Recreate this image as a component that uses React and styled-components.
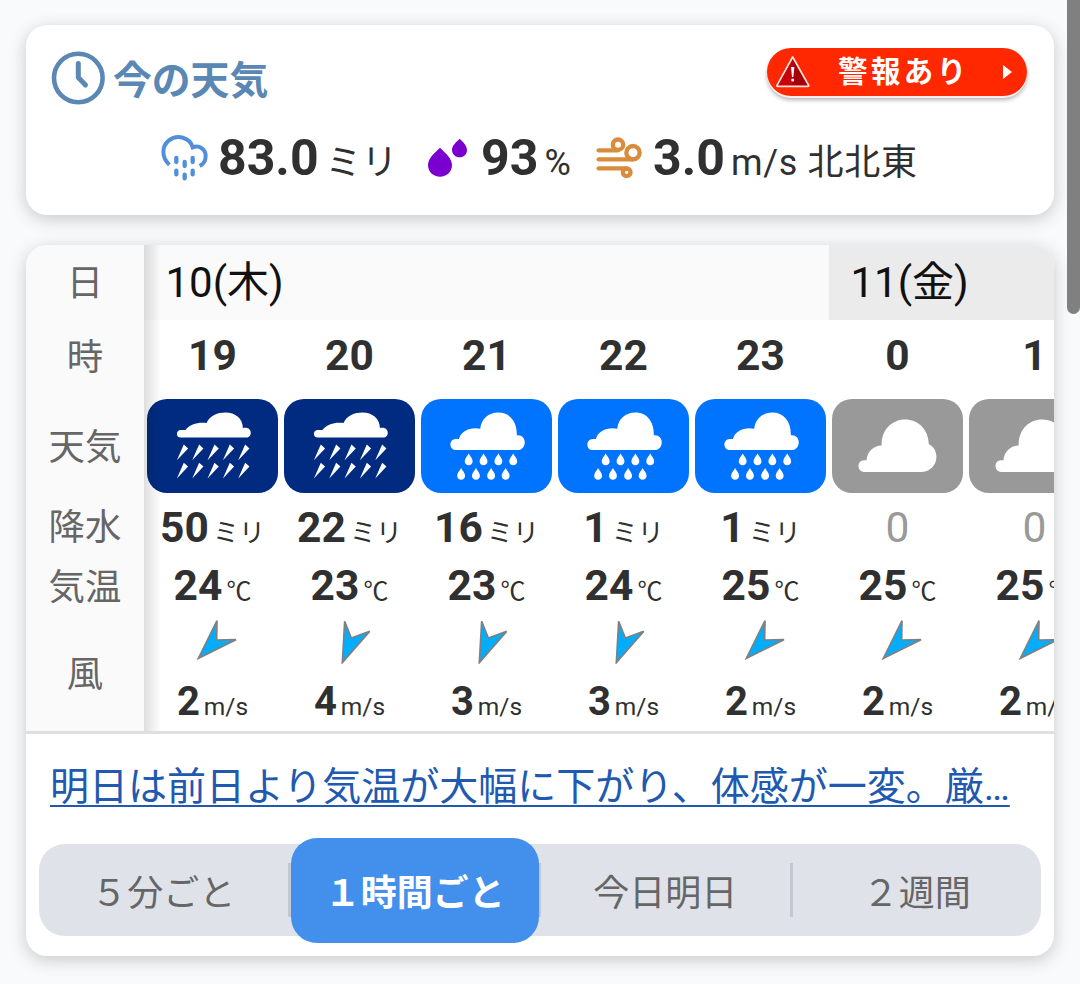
import React from "react";
import styled, { createGlobalStyle } from "styled-components";

const GlobalStyle = createGlobalStyle`
    * {
        box-sizing: border-box;
    }
    body {
        margin: 0;
        height: 984px;
        overflow: hidden;
        background: #f9fafc;
        font-family: Roboto, "Noto Sans CJK JP", sans-serif;
        color: #303030;
    }
`;

const Page = styled.main`
    display: flex;
    flex-direction: column;
    gap: 30px;
    width: 1080px;
    padding: 25px 26px 28px;
`;

const Scrollbar = styled.div`
    position: fixed;
    top: -10px;
    right: 0;
    width: 13px;
    height: 324px;
    border-radius: 7px;
    background: #808080;
`;

const Card = styled.section`
    overflow: hidden;
    border-radius: 21px;
    background: #fff;
    box-shadow: 0 4px 18px rgba(0, 0, 0, 0.2);
`;

const NowCard = styled(Card)`
    height: 190px;
`;

const NowHeader = styled.header`
    display: flex;
    justify-content: space-between;
    height: 105px;
    padding: 22px 27px 0 25px;
`;

const Title = styled.h1`
    display: flex;
    align-items: center;
    gap: 8px;
    height: 62px;
    margin: 0;
    font-size: 38.8px;
    font-weight: 700;
    line-height: 62px;
    color: #5a87b3;

    span {
        padding-top: 5px;
    }
`;

const WarningButton = styled.a`
    display: flex;
    align-items: center;
    width: 260px;
    height: 48px;
    margin-top: 1px;
    padding: 0 15px 0 8px;
    border-radius: 24px;
    background: #ff2800;
    box-shadow: 0 2px 0 #fdf1ee, 0 4px 4px rgba(0, 0, 0, 0.3);
    color: #fff;
`;

const WarningText = styled.span`
    flex: 1;
    padding-left: 27px;
    font-size: 29.5px;
    font-weight: 700;
    line-height: 48px;
    letter-spacing: 3.4px;
    white-space: nowrap;
`;

const NowValues = styled.div`
    display: flex;
    padding-left: 134px;
    height: 56px;
`;

const NowItem = styled.div`
    display: flex;
    align-items: baseline;
    width: ${(p) => p.$width}px;
    font-size: 50px;
    font-weight: 700;
    line-height: 56px;
    white-space: nowrap;

    svg {
        flex: none;
        align-self: flex-start;
        margin-top: ${(p) => p.$top}px;
        margin-right: ${(p) => p.$gap}px;
    }
`;

const NowUnit = styled.span`
    margin-left: ${(p) => p.$gap}px;
    font-size: 36px;
    font-weight: 400;
    line-height: 1;
    letter-spacing: ${(p) => p.$spacing || 0}px;
`;

const ForecastCard = styled(Card)`
    height: 711px;
`;

const Table = styled.div`
    display: flex;
    height: 489px;
    border-bottom: 3px solid #dfdfdf;
`;

const Labels = styled.div`
    flex: none;
    width: 118px;
    background: #fafafa;
`;

const Label = styled.div`
    height: ${(p) => p.$height}px;
    font-size: 36.4px;
    line-height: ${(p) => p.$line}px;
    text-align: center;
    color: #666;
`;

const Scroller = styled.div`
    position: relative;
    flex: 1;
    overflow: hidden;

    &::before {
        content: "";
        position: absolute;
        z-index: 1;
        inset: 0 auto 0 0;
        width: 17px;
        background: linear-gradient(to right, rgba(0, 0, 0, 0.13), rgba(0, 0, 0, 0));
    }
`;

const Dates = styled.div`
    display: flex;
    height: 75px;
`;

const DateCell = styled.div`
    flex: none;
    width: ${(p) => p.$hours * 137}px;
    padding-left: 21.5px;
    background: ${(p) => (p.$shaded ? "#ebebeb" : "#fafafa")};
    font-size: 42px;
    line-height: 75px;
    color: #111;
`;

const Hours = styled.div`
    display: flex;
`;

const Hour = styled.div`
    flex: none;
    width: 137px;
    text-align: center;
`;

const Time = styled.div`
    height: 79px;
    font-size: 42.5px;
    font-weight: 700;
    line-height: 72px;
`;

const Tile = styled.div`
    width: 131px;
    height: 94px;
    margin-left: 3px;
    overflow: hidden;
    border-radius: 20px;
    background: ${(p) => p.$color};

    svg {
        display: block;
        width: 131px;
        height: 94px;
    }
`;

const Reading = styled.div`
    display: flex;
    justify-content: center;
    align-items: baseline;
    gap: ${(p) => p.$gap || 4}px;
    height: ${(p) => p.$height || 58}px;
    font-size: ${(p) => p.$size || 42.5}px;
    font-weight: ${(p) => (p.$empty ? 400 : 700)};
    line-height: ${(p) => p.$height || 58}px;
    color: ${(p) => (p.$empty ? "#999" : "#303030")};
    white-space: nowrap;

    small {
        font-size: ${(p) => p.$unit || 26}px;
        font-weight: 400;
        line-height: 1;
    }
`;

const Arrow = styled.svg`
    display: block;
    width: 50px;
    height: 50px;
    margin: 4px auto -2px;
`;

const NewsLink = styled.a`
    display: block;
    width: 1000px;
    height: 110px;
    padding-left: 24px;
    font-size: 39px;
    line-height: 107px;
    color: #2158b0;
    text-decoration: underline;
    text-decoration-thickness: 2px;
    text-underline-offset: 5px;
    white-space: nowrap;
`;

const Tabs = styled.nav`
    display: flex;
    align-items: center;
    height: 92px;
    margin: 0 13px;
    border-radius: 26px;
    background: #e0e2ea;
`;

const Tab = styled.button`
    position: relative;
    flex: 1;
    height: ${(p) => (p.$active ? 105 : 92)}px;
    margin: 0 ${(p) => (p.$active ? -1 : 0)}px 0 0;
    padding: 0;
    border: 0;
    border-radius: 26px;
    background: ${(p) => (p.$active ? "#438fec" : "transparent")};
    color: ${(p) => (p.$active ? "#fff" : "#666")};
    font-family: inherit;
    font-size: 36px;
    font-weight: ${(p) => (p.$active ? 700 : 400)};
`;

const Divider = styled.i`
    width: 3px;
    height: 54px;
    background: #c4c7d0;
`;

const ClockIcon = () => (
    <svg width="54" height="54" viewBox="0 0 54 54" fill="none" stroke="#5a87b3">
        <circle cx="27.3" cy="27" r="24.3" strokeWidth="4.6" />
        <path d="M27.300 12.500V26.500L34.500 34" strokeWidth="5" strokeLinecap="round" strokeLinejoin="round" />
    </svg>
);

const AlertIcon = () => (
    <svg width="36" height="34" viewBox="104 102 108 102">
        <defs>
            <linearGradient id="alert" x1="0" x2="1">
                <stop offset="0.45" stopColor="#c8000c" />
                <stop offset="0.55" stopColor="#a50008" />
            </linearGradient>
        </defs>
        <path
            d="M157 108L205 193Q206 196 202 196H112Q108 196 110 193Z"
            fill="url(#alert)"
            stroke="#ffe4de"
            strokeWidth="5"
            strokeLinejoin="round"
        />
        <path d="M152 138H162L159 168H155Z" fill="#fff" />
        <circle cx="157" cy="177" r="4.5" fill="#fff" />
    </svg>
);

const RainIcon = () => (
    <svg width="50" height="50" viewBox="420 336 150 150" fill="none" stroke="#528fdb" strokeLinecap="round">
        <path
            d="M448 434C424 412 425 379 446 362C472 341 510 353 518 382C540 374 557 389 557 408C557 423 549 433 539 438"
            strokeWidth="12"
            strokeLinecap="butt"
        />
        <path d="M469 414V426M518 414V426M494 426V438M469 452V463M518 452V463M494 464V475" strokeWidth="13" />
    </svg>
);

const DropsIcon = () => (
    <svg width="42" height="42" viewBox="138 47 126 126" fill="#7b00d0">
        <path d="M180 82C196 97 216 114 216 134C216 155 200 169 180 169C160 169 144 155 144 134C144 114 164 97 180 82Z" />
        <path d="M239 55C249 65 261 75 261 89C261 102 251 111 239 111C227 111 216 102 216 89C216 75 229 65 239 55Z" />
    </svg>
);

const WindIcon = () => (
    <svg
        width="48"
        height="48"
        viewBox="646 41 144 144"
        fill="none"
        stroke="#d98c3c"
        strokeWidth="13"
        strokeLinecap="round"
    >
        <path d="M657 90H714" />
        <circle cx="715" cy="73" r="15.5" />
        <path d="M657 117H760" />
        <circle cx="760" cy="97" r="20" />
        <path d="M657 144H741" />
        <circle cx="741" cy="156" r="11.5" />
    </svg>
);

const streakXs = [0, 46.5, 93, 139.5, 186];

const HeavyRain = () => (
    <svg viewBox="10 26 396 285" fill="#fff">
        <path d="M112 143C96 143 96 120 112 120H126C140 101 168 95 190 99C199 76 224 67 247 67C277 67 301 86 300 114C315 110 324 118 324 128C324 138 317 143 308 143Z" />
        {[0, 55].map((y) =>
            streakXs.map((x) => (
                <path key={`${x}-${y}`} d="M100 212L121 164L134 176Z" transform={`translate(${x} ${y})`} />
            ))
        )}
    </svg>
);

const dropSpots = [
    [565, 191],
    [610, 191],
    [655, 191],
    [700, 191],
    [542, 235],
    [587, 235],
    [633, 235],
    [677, 235],
];

const Rain = () => (
    <svg viewBox="421 26 396 285" fill="#fff">
        <path d="M526 181C504 181 504 147 526 147H535C543 121 572 110 600 116C603 87 625 67 655 67C688 67 712 92 711 136C725 134 735 144 735 157C735 172 725 181 712 181Z" />
        {dropSpots.map(([x, y]) => (
            <path
                key={`${x}-${y}`}
                d="M0 0C4 8 12 15 12 24C12 32 6 36 0 36C-6 36-12 32-12 24C-12 15-4 8 0 0Z"
                transform={`translate(${x} ${y})`}
            />
        ))}
    </svg>
);

const Cloudy = () => (
    <svg viewBox="34 491 396 285" fill="#fff">
        <path d="M131 712C108 712 108 677 131 677H138C140 650 159 633 184 632C182 585 215 553 255 553C295 553 326 583 327 628C343 636 350 650 350 667C350 692 330 712 306 712Z" />
    </svg>
);

const weathers = {
    heavy: { color: "#002b80", Icon: HeavyRain },
    rain: { color: "#0073ff", Icon: Rain },
    cloudy: { color: "#999", Icon: Cloudy },
};

const arrows = {
    sw: "174,476 230,363 229,421 287,420",
    ssw: "195,489 202,365 222,415 277,395",
};

const hours = [
    { time: 19, weather: "heavy", rain: 50, temp: 24, dir: "sw", wind: 2 },
    { time: 20, weather: "heavy", rain: 22, temp: 23, dir: "ssw", wind: 4 },
    { time: 21, weather: "rain", rain: 16, temp: 23, dir: "ssw", wind: 3 },
    { time: 22, weather: "rain", rain: 1, temp: 24, dir: "ssw", wind: 3 },
    { time: 23, weather: "rain", rain: 1, temp: 25, dir: "sw", wind: 2 },
    { time: 0, weather: "cloudy", rain: 0, temp: 25, dir: "sw", wind: 2 },
    { time: 1, weather: "cloudy", rain: 0, temp: 25, dir: "sw", wind: 2 },
];

const HourColumn = ({ time, weather, rain, temp, dir, wind }) => {
    const { color, Icon } = weathers[weather];
    return (
        <Hour>
            <Time>{time}</Time>
            <Tile $color={color}>
                <Icon />
            </Tile>
            <Reading $height={69} $empty={rain === 0}>
                {rain}
                {rain > 0 && <small>ミリ</small>}
            </Reading>
            <Reading $height={48} $unit={25}>
                {temp}
                <small>℃</small>
            </Reading>
            <Arrow viewBox="143 343 150 150">
                <polygon points={arrows[dir]} fill="#00adff" stroke="#808080" strokeWidth="5" />
            </Arrow>
            <Reading $size={40} $gap={4} $height={80} $unit={24.5}>
                {wind}
                <small>m/s</small>
            </Reading>
        </Hour>
    );
};

const App = () => {
    return (
        <>
            <GlobalStyle />
            <Page>
                <NowCard>
                    <NowHeader>
                        <Title>
                            <ClockIcon />
                            <span>今の天気</span>
                        </Title>
                        <WarningButton>
                            <AlertIcon />
                            <WarningText>警報あり</WarningText>
                            <svg width="9" height="14" viewBox="0 0 9 14">
                                <path d="M0 0L9 7L0 14Z" fill="#fff" />
                            </svg>
                        </WarningButton>
                    </NowHeader>
                    <NowValues>
                        <NowItem $width={266} $gap={8} $top={2}>
                            <RainIcon />
                            83.0
                            <NowUnit $gap={7}>ミリ</NowUnit>
                        </NowItem>
                        <NowItem $width={169} $gap={13} $top={6}>
                            <DropsIcon />
                            93
                            <NowUnit $gap={6}>%</NowUnit>
                        </NowItem>
                        <NowItem $width={330} $gap={10} $top={4}>
                            <WindIcon />
                            3.0
                            <NowUnit $gap={6} $spacing={0.7}>m/s 北北東</NowUnit>
                        </NowItem>
                    </NowValues>
                </NowCard>
                <ForecastCard>
                    <Table>
                        <Labels>
                            <Label $height={75} $line={78}>日</Label>
                            <Label $height={79} $line={76}>時</Label>
                            <Label $height={98} $line={98}>天気</Label>
                            <Label $height={58} $line={62}>降水</Label>
                            <Label $height={58} $line={66}>気温</Label>
                            <Label $height={118} $line={124}>風</Label>
                        </Labels>
                        <Scroller>
                            <Dates>
                                <DateCell $hours={5}>10(木)</DateCell>
                                <DateCell $hours={2} $shaded>11(金)</DateCell>
                            </Dates>
                            <Hours>
                                {hours.map((hour) => (
                                    <HourColumn key={hour.time} {...hour} />
                                ))}
                            </Hours>
                        </Scroller>
                    </Table>
                    <NewsLink>明日は前日より気温が大幅に下がり、体感が一変。厳…</NewsLink>
                    <Tabs>
                        <Tab>５分ごと</Tab>
                        <Divider />
                        <Tab $active>１時間ごと</Tab>
                        <Divider />
                        <Tab>今日明日</Tab>
                        <Divider />
                        <Tab>２週間</Tab>
                    </Tabs>
                </ForecastCard>
            </Page>
            <Scrollbar />
        </>
    );
};

export default App;
